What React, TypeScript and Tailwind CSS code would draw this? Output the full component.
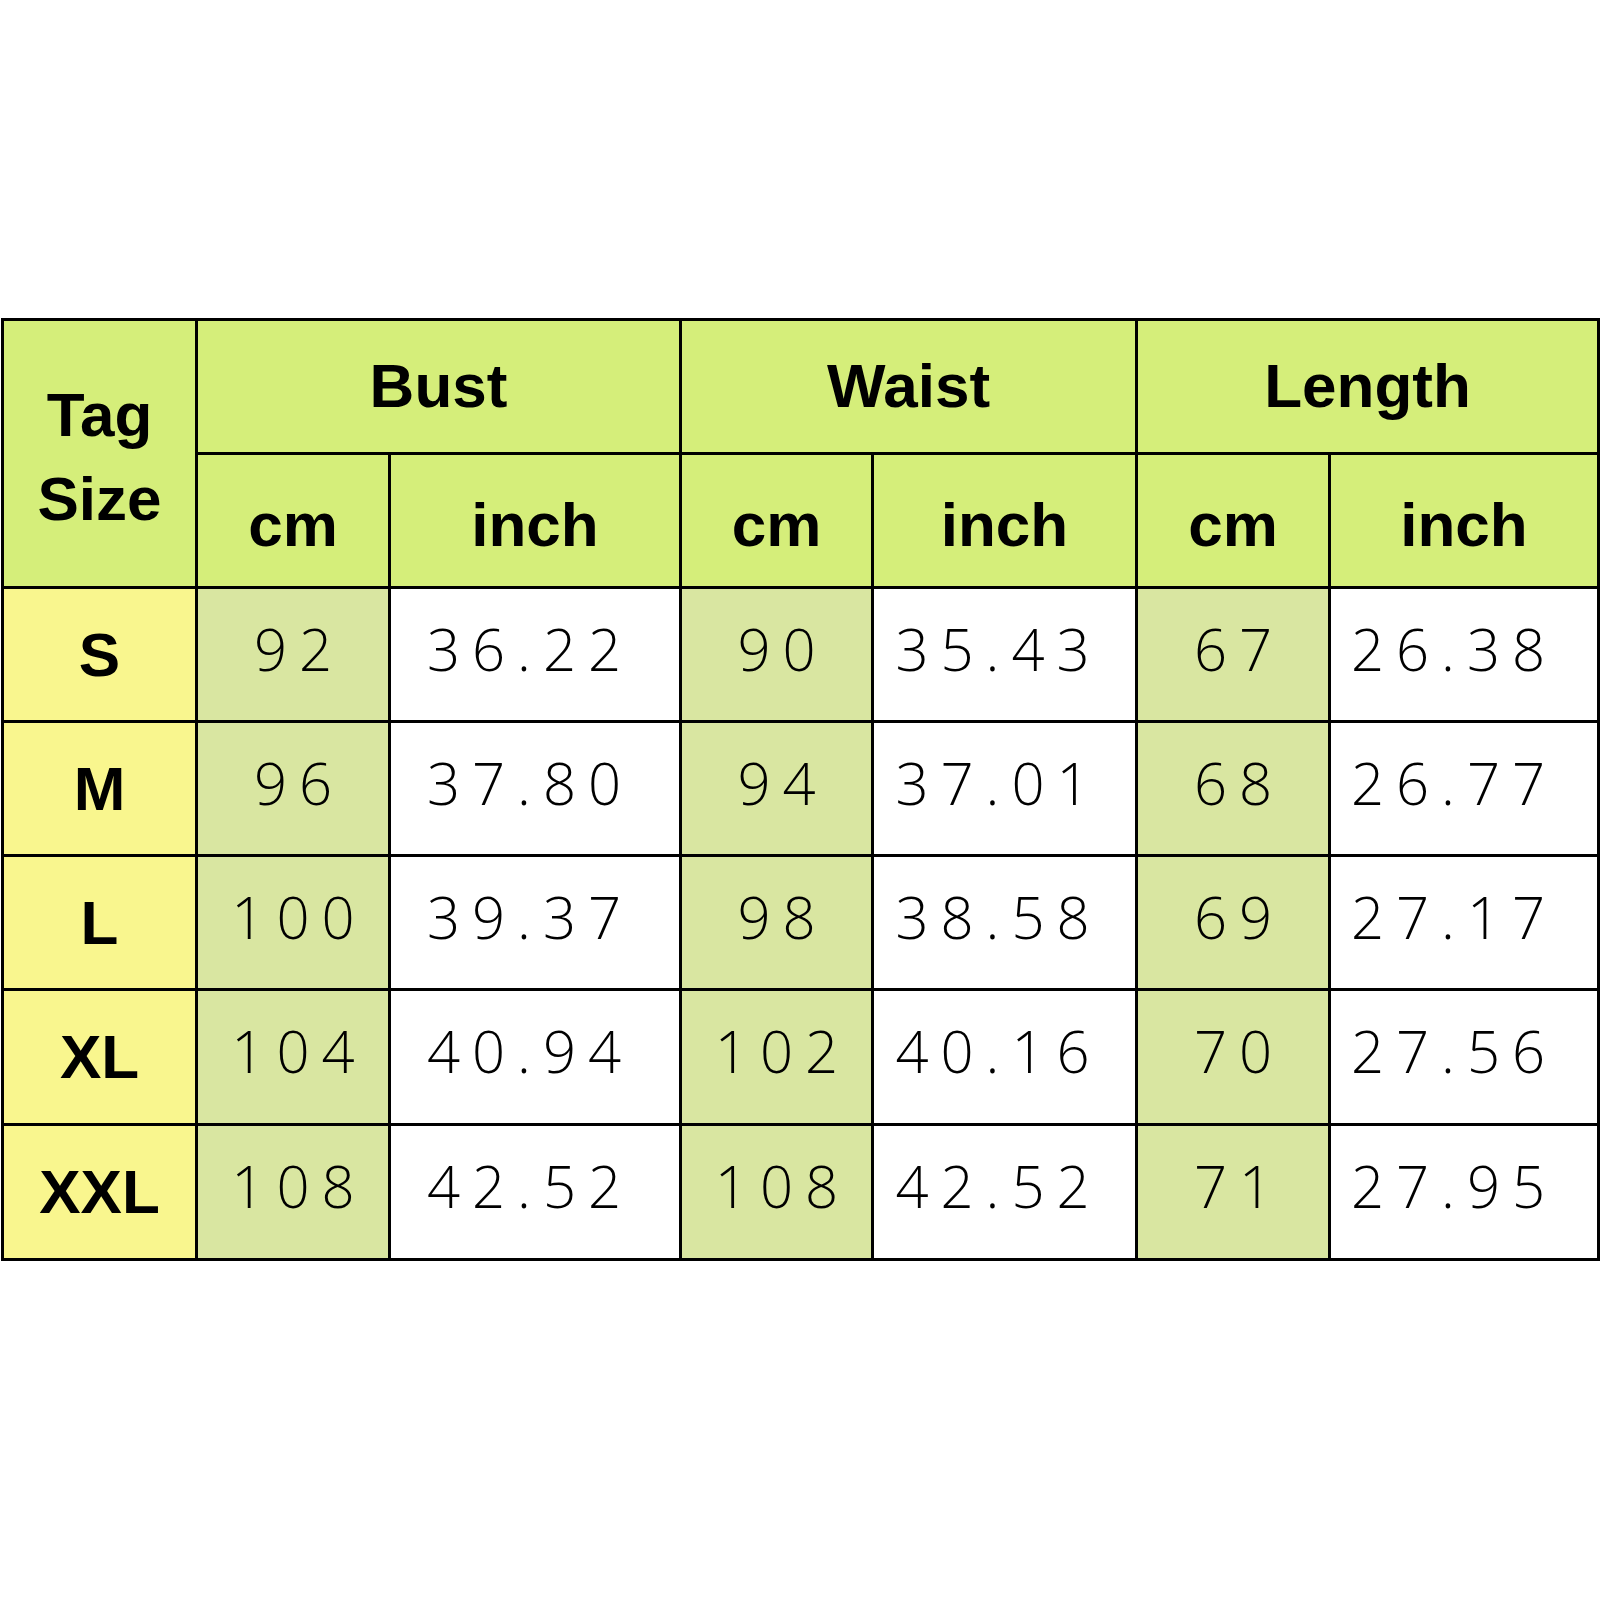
import React from "react";

const rows = [
  { size: "S", v: ["92", "36.22", "90", "35.43", "67", "26.38"] },
  { size: "M", v: ["96", "37.80", "94", "37.01", "68", "26.77"] },
  { size: "L", v: ["100", "39.37", "98", "38.58", "69", "27.17"] },
  { size: "XL", v: ["104", "40.94", "102", "40.16", "70", "27.56"] },
  { size: "XXL", v: ["108", "42.52", "108", "42.52", "71", "27.95"] },
];

const head = "flex items-center justify-center bg-[#d5ee7a] text-black font-bold text-[62px]";
const num = "flex items-center justify-center text-black text-[58px] leading-none tracking-[12px] pb-[12px] font-light";
const numFont = { fontFamily: '"Open Sans", "DejaVu Sans", sans-serif' };

export default function App() {
  return (
    <div className="w-[1600px] h-[1600px] bg-white pt-[318px] pl-[1px]" style={{ fontFamily: '"Liberation Sans", Arial, sans-serif' }}>
      <div className="grid w-[1599px] bg-black p-[3px] gap-[3px] grid-cols-[191px_190px_288px_189px_261px_190px_266px] grid-rows-[131px_131px_131px_131px_131px_132px_132px]">
        <div className={`${head} row-span-2 flex-col leading-[84px] pt-[6px]`}>
          <span>Tag</span>
          <span>Size</span>
        </div>
        <div className={`${head} leading-none col-span-2 pb-[2px]`}>Bust</div>
        <div className={`${head} leading-none col-span-2 pb-[2px]`}>Waist</div>
        <div className={`${head} leading-none col-span-2 pb-[2px]`}>Length</div>
        <div className={`${head} leading-none pt-[8px]`}>cm</div>
        <div className={`${head} leading-none pt-[8px]`}>inch</div>
        <div className={`${head} leading-none pt-[8px]`}>cm</div>
        <div className={`${head} leading-none pt-[8px]`}>inch</div>
        <div className={`${head} leading-none pt-[8px]`}>cm</div>
        <div className={`${head} leading-none pt-[8px]`}>inch</div>
        {rows.map((r) => (
          <React.Fragment key={r.size}>
            <div className="flex items-center justify-center bg-[#f9f68e] text-black font-bold text-[62px] leading-none">{r.size}</div>
            <div className={`${num} bg-[#d9e6a1] pl-[12px]`} style={numFont}>{r.v[0]}</div>
            <div className={`${num} bg-white pr-[10px]`} style={numFont}>{r.v[1]}</div>
            <div className={`${num} bg-[#d9e6a1] pl-[12px]`} style={numFont}>{r.v[2]}</div>
            <div className={`${num} bg-white pr-[12px]`} style={numFont}>{r.v[3]}</div>
            <div className={`${num} bg-[#d9e6a1] pl-[12px]`} style={numFont}>{r.v[4]}</div>
            <div className={`${num} bg-white pr-[20px]`} style={numFont}>{r.v[5]}</div>
          </React.Fragment>
        ))}
      </div>
    </div>
  );
}
